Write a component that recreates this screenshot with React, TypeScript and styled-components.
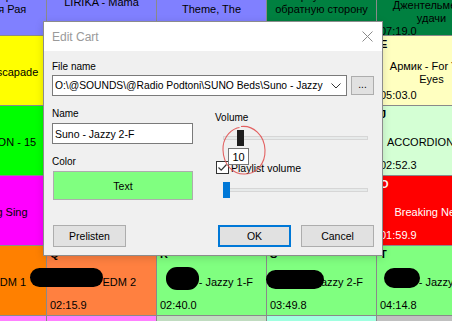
import React from 'react';
import styled, { createGlobalStyle } from 'styled-components';

const GlobalStyle = createGlobalStyle`
  html, body {
    margin: 0;
    padding: 0;
    overflow: hidden;
    background: #808080;
  }
  body {
    font-family: 'Liberation Sans', Arial, sans-serif;
  }
`;

interface ICart {
  bg: string;
  fg?: string;
  label?: string;
  title: string;
  time: string;
}

const carts: ICart[] = [
  { bg: '#8080ff', label: 'A', title: 'Песня про\nЛюбимая Рая', time: '03:12.4' },
  { bg: '#8080ff', label: 'B', title: 'LIRIKA - Mama', time: '03:40.1' },
  { bg: '#8080ff', label: 'C', title: 'Pink Panther\nTheme, The', time: '02:58.0' },
  { bg: '#008040', label: 'D', title: 'Вернуться на\nобратную сторону', time: '04:05.2' },
  { bg: '#008040', label: 'E', title: 'Песня из к/ф\nДжентельмены\nудачи', time: '07:19.0' },

  { bg: '#ffff00', label: 'A', title: 'Summer Escapade', time: '02:31.7' },
  { bg: '#ffff80', label: 'B', title: 'Intro', time: '00:12.0' },
  { bg: '#ffff80', label: 'C', title: 'Outro', time: '00:14.5' },
  { bg: '#ffff80', label: 'D', title: 'Jingle', time: '00:09.8' },
  { bg: '#ffffc0', label: 'E', title: 'Армик - For Your\nEyes', time: '05:03.0' },

  { bg: '#00ff00', label: 'F', title: 'ACCORDION - 15', time: '02:12.0' },
  { bg: '#d4ffd4', label: 'G', title: 'ACCORDION - 12', time: '02:20.3' },
  { bg: '#d4ffd4', label: 'H', title: 'ACCORDION - 13', time: '02:41.9' },
  { bg: '#d4ffd4', label: 'I', title: 'ACCORDION - 14', time: '02:33.1' },
  { bg: '#d4ffd4', label: 'J', title: 'ACCORDION - 16', time: '02:52.3' },

  { bg: '#ff00ff', label: 'K', title: 'Sing Sing Sing', time: '03:01.5' },
  { bg: '#ff0000', fg: '#ffffff', label: 'L', title: 'News', time: '01:00.0' },
  { bg: '#ff0000', fg: '#ffffff', label: 'M', title: 'Weather', time: '01:10.0' },
  { bg: '#ff0000', fg: '#ffffff', label: 'N', title: 'Traffic', time: '01:05.0' },
  { bg: '#ff0000', fg: '#ffffff', label: 'O', title: 'Breaking News', time: '01:59.9' },

  { bg: '#ff8000', label: 'P', title: 'Suno - EDM 1', time: '02:22.6' },
  { bg: '#ff8040', label: 'Q', title: 'Suno - EDM 2', time: '02:15.9' },
  { bg: '#80ff80', label: 'R', title: 'Suno - Jazzy 1-F', time: '02:40.0' },
  { bg: '#80ff80', label: 'S', title: 'Suno - Jazzy 2-F', time: '03:49.8' },
  { bg: '#80ff80', label: 'T', title: 'Suno - Jazzy 3-F', time: '04:14.8' },

  { bg: '#ff80ff', title: '', time: '' },
  { bg: '#ff80ff', title: '', time: '' },
  { bg: '#c0dcc0', title: '', time: '' },
  { bg: '#a0ffe0', title: '', time: '' },
  { bg: '#c0c0c0', title: '', time: '' },
];

const blobs = [
  { left: 30, top: 268, width: 73, height: 19 },
  { left: 166, top: 267, width: 33, height: 23 },
  { left: 266, top: 270, width: 58, height: 19 },
  { left: 384, top: 268, width: 36, height: 20 },
];

function App() {
  return (
    <Page>
      <GlobalStyle/>
      <Grid>
        { carts.map((c, i) => (
          <Cell key={ i } $bg={ c.bg } $fg={ c.fg }>
            <CellLabel>{ c.label }</CellLabel>
            <CellTitle>{ c.title }</CellTitle>
            <CellTime>{ c.time }</CellTime>
          </Cell>
        )) }
      </Grid>

      { blobs.map((b, i) => (
        <Blob key={ i } style={ { left: b.left, top: b.top, width: b.width, height: b.height } }/>
      )) }

      <Dialog>
        <TitleBar>
          <TitleText>Edit Cart</TitleText>
          <svg width='11' height='11' viewBox='0 0 11 11'>
            <path d='M0.5 0.5 L10.5 10.5 M10.5 0.5 L0.5 10.5' stroke='#8a8a8a' strokeWidth='1'/>
          </svg>
        </TitleBar>
        <Body>
          <FieldLabel $top={ 9 }>File name</FieldLabel>
          <FileRow>
            <Combo>
              <ComboText>O:\@SOUNDS\@Radio Podtoni\SUNO Beds\Suno - Jazzy</ComboText>
              <svg width='10' height='6' viewBox='0 0 10 6'>
                <polyline points='0.5,0.5 5,5 9.5,0.5' fill='none' stroke='#333' strokeWidth='1'/>
              </svg>
            </Combo>
            <BrowseButton>...</BrowseButton>
          </FileRow>
          <Columns>
            <LeftColumn>
              <FieldLabel>Name</FieldLabel>
              <NameInput>Suno - Jazzy 2-F</NameInput>
              <FieldLabel $top={ 11 }>Color</FieldLabel>
              <ColorButton $bg='#80ff80'>Text</ColorButton>
            </LeftColumn>
            <RightColumn>
              <FieldLabel $top={ 4 }>Volume</FieldLabel>
              <Slider $top={ 6 }>
                <Track/>
                <Thumb $left={ 22 } $color='#1e1e1e'/>
                <Tip>10</Tip>
              </Slider>
              <CheckRow>
                <CheckBox>
                  <svg width='11' height='11' viewBox='0 0 11 11'>
                    <polyline points='1.5,5.5 4.2,8.2 9.5,2.5' fill='none' stroke='#333' strokeWidth='1.2'/>
                  </svg>
                </CheckBox>
                <CheckText>Playlist volume</CheckText>
              </CheckRow>
              <Slider $top={ 8 }>
                <Track/>
                <Thumb $left={ 8 } $color='#0078d7'/>
              </Slider>
            </RightColumn>
          </Columns>
          <Footer>
            <Button>Prelisten</Button>
            <Spacer/>
            <Button $default>OK</Button>
            <Button>Cancel</Button>
          </Footer>
        </Body>
      </Dialog>

      <Scribble width='52' height='58' viewBox='218 122 52 58'>
        <path
          d='M241 126.5 C253 125, 264.5 135, 265 150 C265.5 164, 256 174, 245 174 C233 174.5, 223.5 165, 223 150 C222.5 139, 229 131, 237 128 L239.5 127.5'
          fill='none'
          stroke='#e04848'
          strokeWidth='1.1'
          opacity='0.85'
        />
      </Scribble>
    </Page>
  );
}

const Page = styled.div`
  position: relative;
  width: 452px;
  height: 321px;
  overflow: hidden;
`;

const Grid = styled.div`
  display: grid;
  grid-template-columns: repeat(5, 109px);
  grid-auto-rows: 69px;
  gap: 1px;
  margin-left: -63px;
  margin-top: -34px;
  width: max-content;
  background: #8a8a8a;
`;

const Cell = styled.div<{ $bg: string; $fg?: string }>`
  display: flex;
  flex-direction: column;
  padding: 2px 3px 3px;
  background: ${ p => p.$bg };
  color: ${ p => p.$fg || '#000' };
  font-size: 11px;
  line-height: 13px;
  overflow: hidden;
  box-sizing: border-box;
`;

const CellLabel = styled.div`
  height: 13px;
  font-weight: bold;
`;

const CellTitle = styled.div`
  flex: 1;
  display: flex;
  align-items: center;
  justify-content: center;
  padding-top: 5px;
  text-align: center;
  white-space: pre-line;
`;

const CellTime = styled.div`
  height: 13px;
`;

const Blob = styled.div`
  position: absolute;
  background: #000;
  border-radius: 11px;
`;

const Dialog = styled.div`
  position: absolute;
  left: 43px;
  top: 21px;
  width: 340px;
  height: 235px;
  box-sizing: border-box;
  border: 1px solid #8c8c8c;
  background: #f0f0f0;
  display: flex;
  flex-direction: column;
  box-shadow: 0 2px 8px rgba(0, 0, 0, 0.15);
  font-size: 10px;
  color: #000;
`;

const TitleBar = styled.div`
  height: 29px;
  background: #fff;
  display: flex;
  align-items: center;
  justify-content: space-between;
  padding: 0 9px 0 8px;
`;

const TitleText = styled.div`
  font-size: 12px;
  color: #9a9a9a;
`;

const Body = styled.div`
  flex: 1;
  display: flex;
  flex-direction: column;
  padding: 0 8px 8px;
`;

const FieldLabel = styled.div<{ $top?: number }>`
  height: 13px;
  line-height: 13px;
  margin-top: ${ p => p.$top || 0 }px;
`;

const FileRow = styled.div`
  display: flex;
  align-items: center;
  gap: 4px;
  margin-top: 2px;
`;

const Combo = styled.div`
  width: 295px;
  height: 21px;
  box-sizing: border-box;
  border: 1px solid #7a7a7a;
  background: #fff;
  display: flex;
  align-items: center;
  padding: 0 5px 0 2px;
  gap: 8px;
`;

const ComboText = styled.div`
  flex: 1;
  overflow: hidden;
  white-space: nowrap;
  font-size: 10.3px;
`;

const BrowseButton = styled.div`
  width: 23px;
  height: 19px;
  box-sizing: border-box;
  border: 1px solid #adadad;
  background: #e1e1e1;
  display: flex;
  align-items: center;
  justify-content: center;
  padding-bottom: 3px;
`;

const Columns = styled.div`
  display: flex;
  margin-top: 11px;
`;

const LeftColumn = styled.div`
  width: 141px;
  display: flex;
  flex-direction: column;
`;

const RightColumn = styled.div`
  width: 155px;
  margin-left: 22px;
  display: flex;
  flex-direction: column;
`;

const NameInput = styled.div`
  height: 21px;
  margin-top: 3px;
  box-sizing: border-box;
  border: 1px solid #7a7a7a;
  background: #fff;
  display: flex;
  align-items: center;
  padding-left: 2px;
  font-size: 10.5px;
`;

const ColorButton = styled.div<{ $bg: string }>`
  height: 29px;
  width: 140px;
  margin: 3px 0 0 1px;
  box-sizing: border-box;
  border: 1px solid #adadad;
  background: ${ p => p.$bg };
  display: flex;
  align-items: center;
  justify-content: center;
  font-size: 10.5px;
`;

const Slider = styled.div<{ $top: number }>`
  position: relative;
  width: 153px;
  height: 16px;
  margin-top: ${ p => p.$top }px;
`;

const Track = styled.div`
  position: absolute;
  left: 8px;
  right: 0;
  top: 6px;
  height: 4px;
  box-sizing: border-box;
  border: 1px solid #d6d6d6;
  background: #e7eaea;
`;

const Thumb = styled.div<{ $left: number; $color: string }>`
  position: absolute;
  top: 0;
  left: ${ p => p.$left }px;
  width: 7px;
  height: 16px;
  background: ${ p => p.$color };
`;

const Tip = styled.div`
  position: absolute;
  z-index: 2;
  left: 13px;
  top: 18px;
  width: 21px;
  height: 17px;
  box-sizing: border-box;
  border: 1px solid #767676;
  background: #fff;
  font-size: 11px;
  display: flex;
  align-items: center;
  justify-content: center;
`;

const CheckRow = styled.div`
  display: flex;
  align-items: center;
  margin-top: 15px;
  margin-left: 1px;
  height: 13px;
`;

const CheckBox = styled.div`
  width: 13px;
  height: 13px;
  box-sizing: border-box;
  border: 1px solid #333;
  background: #fff;
  display: flex;
  align-items: center;
  justify-content: center;
`;

const CheckText = styled.div`
  margin-left: 2px;
  font-size: 10.5px;
`;

const Footer = styled.div`
  margin-top: auto;
  display: flex;
  gap: 10px;
  padding-left: 1px;
`;

const Spacer = styled.div`
  flex: 1;
`;

const Button = styled.div<{ $default?: boolean }>`
  width: 73px;
  height: 22px;
  box-sizing: border-box;
  border: ${ p => p.$default ? '2px solid #0078d7' : '1px solid #adadad' };
  background: #e1e1e1;
  display: flex;
  align-items: center;
  justify-content: center;
  font-size: 10.5px;
`;

const Scribble = styled.svg`
  position: absolute;
  left: 218px;
  top: 122px;
  z-index: 3;
  pointer-events: none;
`;

export default App;
